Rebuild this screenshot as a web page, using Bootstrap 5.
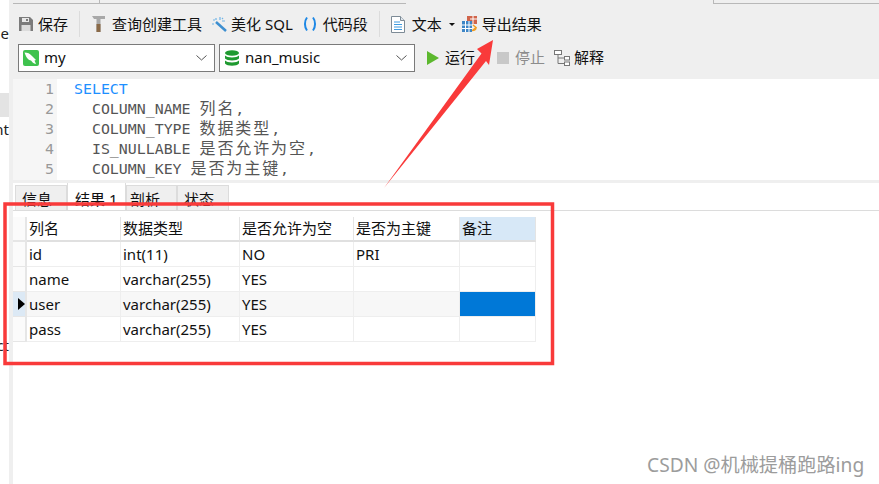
<!doctype html>
<html lang="zh">
<head>
<meta charset="utf-8">
<title>Navicat</title>
<link href="https://cdn.jsdelivr.net/npm/bootstrap@5.3.0/dist/css/bootstrap.min.css" rel="stylesheet">
<style>
html,body{height:484px;overflow:hidden;background:#fff}
body{font-family:"Noto Sans","Noto Sans CJK SC",sans-serif;font-size:15px;color:#111;line-height:20px}
.stage{height:484px;position:relative;overflow:hidden}
.side{width:9px;flex:none;overflow:hidden;padding-top:21px}
.side-row{height:24px;line-height:24px;display:flex;justify-content:flex-end;white-space:nowrap;color:#222}
.side-on{background:#e3e3e3}
.strip{width:4px;flex:none;background:#efefef}
.main{width:866px;flex:none}
.topbar{background:#efefef;height:79px}
.tabline{height:4px;display:flex}
.tl{border-bottom:1px solid #b8b8b8;height:4px}
.tl-v{border-left:1px solid #b8b8b8}
.tl-a{width:86px}.tl-b{width:307px}.tl-c{width:307px}.tl-d{flex:1}
.bar1{height:40px;padding-left:5px}
.bar2{height:28px;padding-left:5px}
.tb-sep{width:1px;height:26px;background:#dcdcdc;margin:0 11px}
.tb-item{display:flex;align-items:center;white-space:nowrap}
.ml4{margin-left:4px}.ml5{margin-left:5px}.ml6{margin-left:6px}.ml7{margin-left:7px}.ml9{margin-left:9px}.ml10{margin-left:10px}.ml12{margin-left:12px}
.picker{height:28px;background:#fff;border:1px solid #7a7a7a;padding:0 7px 0 4px;display:flex;align-items:center}
.pk1{width:197px}.pk2{width:196px;margin-left:4px}
.lbl-up{position:relative;top:-1px}
.muted-t{color:#8c8c8c}
.caret-d{width:0;height:0;border-left:3px solid transparent;border-right:3px solid transparent;border-top:3px solid #111;display:inline-block}
.editor{height:104px;display:flex;font-family:"DejaVu Sans Mono","Noto Sans CJK SC",monospace;font-size:14.9px;line-height:20px;overflow:hidden}
.gut{width:44px;background:#f6f6f6;color:#999;text-align:right;padding:0 3px 0 0;flex:none;height:101px}
.gut div,.code div{height:20px}
.code{padding-left:17px;white-space:pre;color:#555;flex:1}
.kw{color:#1e90ff}
.cjk{font-family:"Noto Sans CJK SC",sans-serif;font-size:16px;letter-spacing:1.9px;line-height:1}
.split{height:3px;background:#efefef;margin-top:-3px;position:relative}
.tabsx{height:28px;border-bottom:1px solid #dcdcdc;padding-left:2px;flex-wrap:nowrap;align-items:flex-end}
.tabsx .nav-link{height:25px;padding:3px 0 0 6px;color:#111;background:#efefef;border:1px solid #dcdcdc;border-bottom:0;border-radius:0;margin:0;line-height:20px;text-align:left;font-size:15px}
.tabsx .nav-link.active{height:28px;padding:6px 0 0 7px;background:#fff;border-color:#dcdcdc;color:#111}
.t1{width:52px}.t2{width:59px}.t3{width:51px;padding-left:3px!important}.t4{width:52px}
.grid-wrap{padding-top:6px}
.gridt{table-layout:fixed;border-collapse:separate;border-spacing:0;width:523px;font-size:15px;color:#111}
.gridt th,.gridt td{height:25px;padding:0 0 0 2px;font-weight:400;line-height:24px;border:0;border-right:1px solid #eee;border-bottom:1px solid #eee;white-space:nowrap;overflow:hidden}
.gridt th{border-right-color:#e4e4e4;border-bottom:2px solid #e0e0e0;line-height:23px}
.gridt .g0{padding:0;border-right:2px solid #e6e6e6;border-bottom-color:#e6e6e6;background:#fbfbfb}
.gridt tr.pick td{background:#f7f7f7}
.gridt tr.pick td.g0{background:#dce9f5}
.gridt th.hl{background:#d7e8f7}
.gridt tr.pick td.cell-sel{background:#0078d7;box-shadow:inset 0 0 0 1px #0078d7}
.tri{width:0;height:0;border-top:6px solid transparent;border-bottom:6px solid transparent;border-left:7px solid #000;display:block;margin-left:5px}
.anno{position:absolute;left:0;top:0;pointer-events:none}
.wm{position:absolute;left:647px;top:454px;font-size:19.2px;line-height:22px;color:#9c9c9c;white-space:nowrap}
</style>
</head>
<body>
<div class="stage d-flex">
  <div class="side">
    <div class="side-row">name</div><div class="side-row"></div><div class="side-row"></div>
    <div class="side-row side-on"></div>
    <div class="side-row">nt</div>
    <div class="side-row"></div><div class="side-row"></div><div class="side-row"></div><div class="side-row"></div><div class="side-row"></div><div class="side-row"></div><div class="side-row"></div><div class="side-row"></div>
    <div class="side-row">ct</div>
  </div>
  <div class="strip"></div>
  <div class="main">
    <div class="topbar">
      <div class="tabline"><div class="tl tl-a"></div><div class="tl tl-b tl-v"></div><div class="tl-c"></div><div class="tl tl-d tl-v"></div></div>
      <div class="bar1 d-flex align-items-center">
        <div class="tb-item">
          <svg width="16" height="16" viewBox="0 0 16 16"><path d="M1 1h11l3 3v11H1z" fill="#7b7b7b"/><rect x="4" y="2" width="7" height="4" fill="#e8e8e8"/><rect x="8" y="3" width="2" height="2" fill="#7b7b7b"/><rect x="3.500" y="9" width="9" height="6" fill="#dcdcdc"/></svg>
          <span class="ml4">保存</span>
        </div>
        <div class="tb-sep"></div>
        <div class="tb-item">
          <svg width="16" height="18" viewBox="0 0 16 18"><path d="M1 1h13v3H9.500v13h-4V4H3z" fill="#a8a8a8"/><rect x="5.500" y="9" width="4" height="8" fill="#8a6a48"/></svg>
          <span class="ml5">查询创建工具</span>
        </div>
        <div class="tb-item ml9">
          <svg width="16" height="16" viewBox="0 0 16 16"><path d="M5 6l10 9" stroke="#3d8fd0" stroke-width="2.500"/><path d="M5 2v2M2 4h2M1 8h2M9 1v3M11 5h3M12 2l-1 1" stroke="#6fb4e6" stroke-width="1.200" fill="none"/></svg>
          <span class="ml4">美化 SQL</span>
        </div>
        <div class="tb-item ml10">
          <svg width="14" height="16" viewBox="0 0 14 16"><path d="M4 1.500C1.300 5 1.300 11 4 14.500M10 1.500C12.700 5 12.700 11 10 14.500" stroke="#1e88e5" stroke-width="2" fill="none"/></svg>
          <span class="ml6">代码段</span>
        </div>
        <div class="tb-sep"></div>
        <div class="tb-item">
          <svg width="14" height="17" viewBox="0 0 14 17"><path d="M.5.500h9l4 4v12H.5z" fill="#fff" stroke="#7d8b96"/><path d="M9.500.500v4h4" fill="#dfe6ec" stroke="#7d8b96"/><path d="M3 6h6M3 8.500h8M3 11h8M3 13.500h8" stroke="#3f9be0"/></svg>
          <span class="ml7">文本</span>
        </div>
        <span class="caret-d ml7"></span>
        <div class="tb-item ml7">
          <svg width="16" height="17" viewBox="0 0 16 17"><rect x="5" y="0" width="10" height="8" fill="#d0644a"/><path d="M8 3h7M11 0v8" stroke="#fff"/><rect x="0" y="5" width="10" height="11" fill="#3e86c6"/><path d="M0 9h10M0 12.500h10M3.500 5v11M7 5v11" stroke="#fff"/><path d="M11 9l3 2.500-3 2.500M14 11.500c0 2-2 3-4 3" stroke="#f39c1f" stroke-width="1.500" fill="none"/></svg>
          <span class="ml4">导出结果</span>
        </div>
      </div>
      <div class="bar2 d-flex align-items-center">
        <div class="picker pk1">
          <svg width="16" height="16" viewBox="0 0 16 16"><rect width="16" height="16" rx="2" fill="#3fc24e"/><path d="M1.500 2.500c3 0 5.500 1 7.500 3.500l4 4-1.500 .5 1.500 3.500c-2.500-.5-4-2-5-3.500C5 10 3 7 1.500 2.500z" fill="#fff"/></svg>
          <span class="ml5 lbl-up">my</span>
          <svg class="ms-auto" width="11" height="6" viewBox="0 0 11 6"><path d="M.5.500l5 4.500 5-4.500" stroke="#555" fill="none"/></svg>
        </div>
        <div class="picker pk2">
          <svg width="16" height="17" viewBox="0 0 16 17"><ellipse cx="8" cy="3" rx="7" ry="2.800" fill="#1f9a30"/><path d="M1 5.500c2 2.500 12 2.500 14 0v3c-2 2.500-12 2.500-14 0zM1 10.500c2 2.500 12 2.500 14 0v3c-2 3-12 3-14 0z" fill="#1f9a30"/></svg>
          <span class="ml5 lbl-up">nan_music</span>
          <svg class="ms-auto" width="11" height="6" viewBox="0 0 11 6"><path d="M.5.500l5 4.500 5-4.500" stroke="#555" fill="none"/></svg>
        </div>
        <div class="tb-item ml12">
          <svg width="12" height="14" viewBox="0 0 12 14"><path d="M0 0l12 7-12 7z" fill="#5cb82e"/></svg>
          <span class="ml6 lbl-up">运行</span>
        </div>
        <span class="caret-d ml7"></span>
        <div class="tb-item ml9">
          <svg width="12" height="12" viewBox="0 0 12 12"><rect width="12" height="12" fill="#c8c8c8"/></svg>
          <span class="ml6 muted-t lbl-up">停止</span>
        </div>
        <div class="tb-item ml9">
          <svg width="16" height="16" viewBox="0 0 16 16" fill="#fff" stroke="#777"><rect x=".5" y=".5" width="7" height="4"/><rect x="10.500" y="6.500" width="5" height="3.500"/><rect x="10.500" y="12" width="5" height="3.500"/><path d="M4 4.500v3.500h6.500M4 8v5.500h6.500" fill="none"/></svg>
          <span class="ml4 lbl-up">解释</span>
        </div>
      </div>
    </div>
    <div class="editor">
      <div class="gut"><div>1</div><div>2</div><div>3</div><div>4</div><div>5</div></div>
      <div class="code"><div><span class="kw">SELECT</span></div><div>  COLUMN_NAME <span class="cjk">列名</span>,</div><div>  COLUMN_TYPE <span class="cjk">数据类型</span>,</div><div>  IS_NULLABLE <span class="cjk">是否允许为空</span>,</div><div>  COLUMN_KEY <span class="cjk">是否为主键</span>,</div></div>
    </div>
    <div class="split"></div>
    <ul class="nav nav-tabs tabsx">
      <li class="nav-item"><a class="nav-link t1" href="#">信息</a></li>
      <li class="nav-item"><a class="nav-link t2 active" href="#">结果 1</a></li>
      <li class="nav-item"><a class="nav-link t3" href="#">剖析</a></li>
      <li class="nav-item"><a class="nav-link t4" href="#">状态</a></li>
    </ul>
    <div class="grid-wrap">
      <table class="gridt">
        <colgroup><col style="width:14px"><col style="width:94px"><col style="width:119px"><col style="width:114px"><col style="width:106px"><col style="width:76px"></colgroup>
        <thead><tr><th class="g0"></th><th>列名</th><th>数据类型</th><th>是否允许为空</th><th>是否为主键</th><th class="hl">备注</th></tr></thead>
        <tbody>
          <tr><td class="g0"></td><td>id</td><td>int(11)</td><td>NO</td><td>PRI</td><td></td></tr>
          <tr><td class="g0"></td><td>name</td><td>varchar(255)</td><td>YES</td><td></td><td></td></tr>
          <tr class="pick"><td class="g0"><span class="tri"></span></td><td>user</td><td>varchar(255)</td><td>YES</td><td></td><td class="cell-sel"></td></tr>
          <tr><td class="g0"></td><td>pass</td><td>varchar(255)</td><td>YES</td><td></td><td></td></tr>
        </tbody>
      </table>
    </div>
  </div>
  <svg class="anno" width="879" height="484" viewBox="0 0 879 484">
    <rect x="5" y="204" width="547.500" height="159.500" fill="none" stroke="#f93a3a" stroke-width="3.500"/>
    <path d="M493 40L477 49l4.500 4.500L384 188l102-127 3 4z" fill="#f93a3a"/>
  </svg>
  <div class="wm">CSDN @机械提桶跑路ing</div>
</div>
<script src="https://cdn.jsdelivr.net/npm/bootstrap@5.3.0/dist/js/bootstrap.bundle.min.js"></script>
</body>
</html>
